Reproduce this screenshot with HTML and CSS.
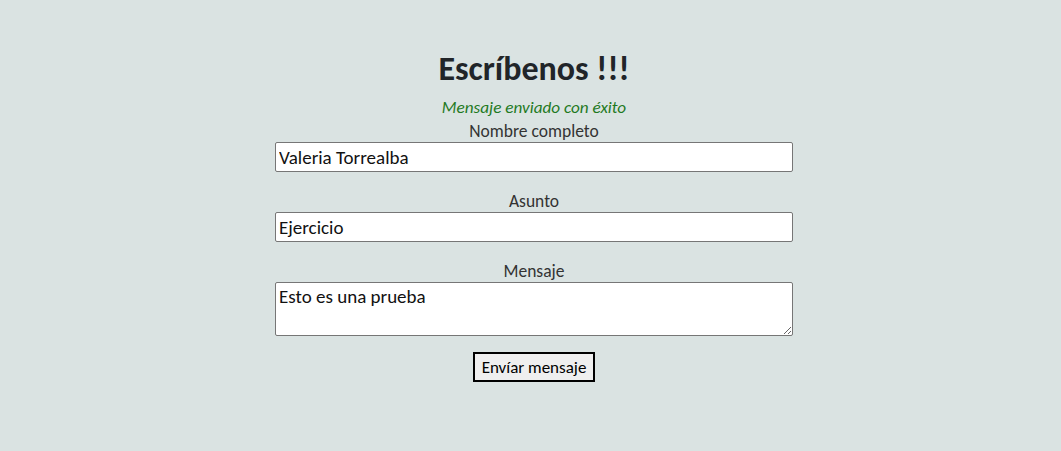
FILE: index.html
```html
<!DOCTYPE html>
<html lang="es">
<head>
<meta charset="utf-8">
<link rel="stylesheet" href="styles.css">
<title>Escríbenos</title>
</head>
<body>
<main class="page">
  <h1 class="title">Escríbenos !!!</h1>
  <p class="success">Mensaje enviado con éxito</p>
  <form class="form">
    <label class="field">
      <span class="label">Nombre completo</span>
      <input class="input" type="text" value="Valeria Torrealba">
    </label>
    <label class="field">
      <span class="label">Asunto</span>
      <input class="input" type="text" value="Ejercicio">
    </label>
    <label class="field field-last">
      <span class="label">Mensaje</span>
      <textarea class="input textarea">Esto es una prueba</textarea>
    </label>
    <button class="submit" type="button">Envíar mensaje</button>
  </form>
</main>
</body>
</html>
```
FILE: styles.css
```css
html, body {
  margin: 0;
  padding: 0;
}
body {
  background: #dae3e2;
  font-family: Carlito, Lato, "Open Sans", sans-serif;
  color: #212529;
}
.page {
  width: 518px;
  margin: 0 auto;
  padding: 47px 0 0 7px;
  display: flex;
  flex-direction: column;
  align-items: center;
}
.title {
  margin: 0;
  font-size: 34px;
  font-weight: 700;
  line-height: 44px;
  color: #212529;
}
.success {
  margin: 5px 0 0;
  font-style: italic;
  font-size: 17.2px;
  line-height: 24px;
  color: #1f7a1f;
}
.form {
  width: 100%;
  display: flex;
  flex-direction: column;
  align-items: center;
}
.field {
  width: 100%;
  display: flex;
  flex-direction: column;
  align-items: center;
  margin-bottom: 18px;
}
.field-last {
  margin-bottom: 16px;
}
.label {
  font-size: 17.5px;
  line-height: 22px;
  color: #333;
}
.input {
  box-sizing: border-box;
  width: 100%;
  height: 30px;
  margin: 0;
  padding: 1px 3px;
  border: 1px solid #767676;
  border-radius: 2px;
  background: #fff;
  font-family: inherit;
  font-size: 19px;
  color: #111;
}
.textarea {
  height: 54px;
  padding: 2px 3px;
  resize: vertical;
  line-height: 24px;
}
.submit {
  box-sizing: border-box;
  height: 30px;
  padding: 0 7px;
  border: 2px solid #000;
  border-radius: 0;
  background: #efefef;
  font-family: inherit;
  font-size: 17px;
  color: #000;
}
```
